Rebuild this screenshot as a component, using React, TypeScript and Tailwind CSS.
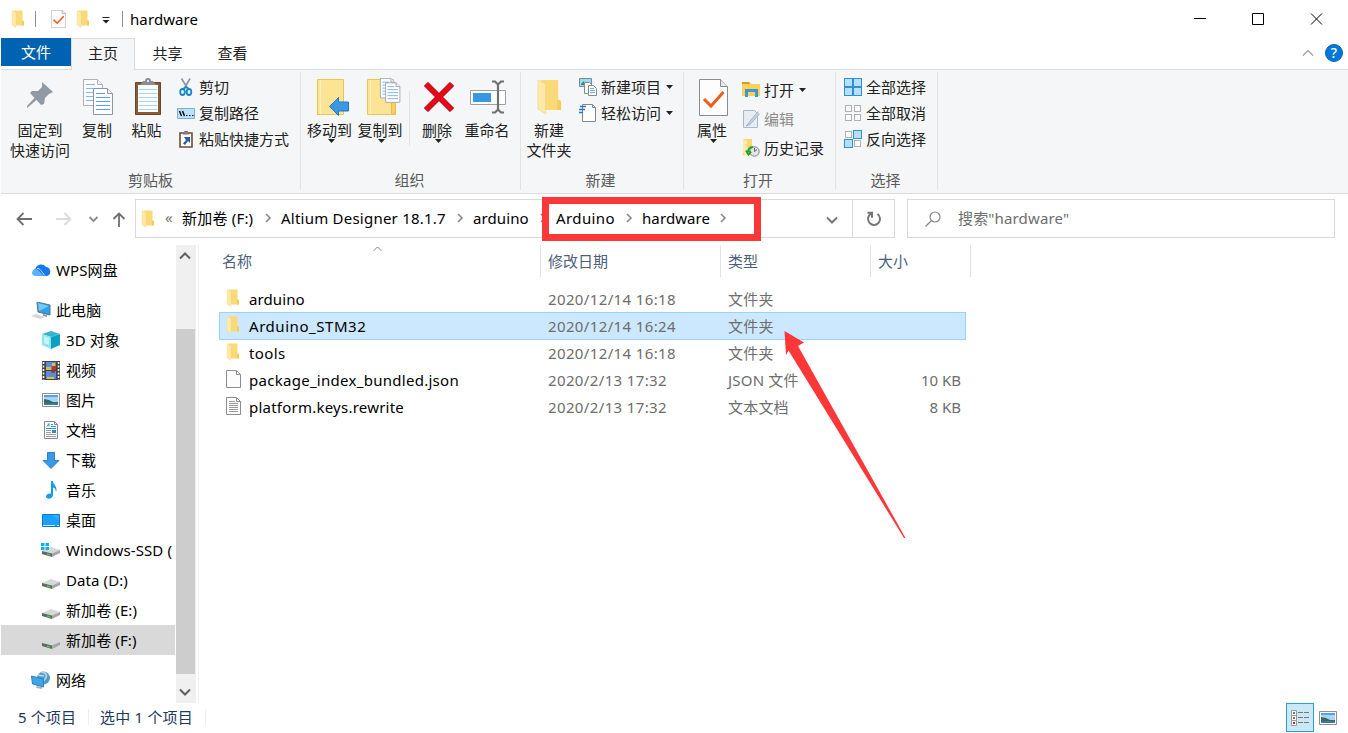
import type { ReactNode } from "react";
import clsx from "clsx";

type IconProps = { className?: string };

export default function App() {
  return (
    <div className="relative flex h-[733px] w-[1348px] flex-col overflow-hidden bg-white pl-px font-['Noto_Sans','Noto_Sans_CJK_SC',sans-serif] text-[15px] leading-5 text-black">
      <TitleBar />
      <Tabs />
      <Ribbon />
      <AddressRow />
      <main className="flex h-[458px]">
        <Sidebar />
        <Scrollbar />
        <FileList />
      </main>
      <StatusBar />

      <div className="absolute left-[542px] top-[197px] h-11 w-[219px] border-[7px] border-[#fb3837]" />
      <svg className="absolute left-[780px] top-[328px]" width="130" height="214" viewBox="780 328 130 214">
        <path d="M784.500 331L804 342.500L798 346L905.500 538L904 538L788.500 350.500L786 355Z" fill="#fb3837" />
      </svg>
    </div>
  );
}

function TitleBar() {
  return (
    <header className="flex h-[38px] shrink-0 items-center">
      <FolderIcon className="ml-[10px] h-[18px] w-[14px]" />
      <span className="ml-[10px] h-4 w-px bg-[#8f8f8f]" />
      <CheckPage className="ml-[15px] h-[18px] w-[15px]" />
      <FolderIcon className="ml-[10px] h-[18px] w-[14px]" />
      <svg className="ml-[12px] mt-0.5" width="8" height="8">
        <path d="M0.500 1.500h7" stroke="#222" />
        <path d="M0.500 4h7l-3.500 3.500z" fill="#222" />
      </svg>
      <span className="ml-[12px] h-4 w-px bg-[#8f8f8f]" />
      <span className="ml-[7px] tracking-[0.1px]">hardware</span>

      <svg className="ml-auto mr-[24px]" width="132" height="14" fill="none" stroke="#000">
        <path d="M2 6.500h12M60.500 1.500h11v11h-11zM119 1.500l11 11M130 1.500l-11 11" />
      </svg>
    </header>
  );
}

function Tabs() {
  return (
    <nav className="flex h-8 shrink-0 items-start">
      <span className="flex h-7 w-[70px] items-center justify-center bg-[#0063b1] text-white">文件</span>
      <span className="z-10 flex h-8 w-16 items-center justify-center border border-b-0 border-[#dadbdc] bg-[#f5f6f7] pb-1 text-[#222]">
        主页
      </span>
      <span className="flex h-8 w-[65px] items-center justify-center pb-0.5 text-[#222]">共享</span>
      <span className="flex h-8 w-[65px] items-center justify-center pb-0.5 text-[#222]">查看</span>
      <Chevron className="ml-auto mt-[10px] h-[9px] w-3 rotate-180 text-[#9a9a9a]" thin />
      <span className="ml-[11px] mr-[5px] mt-1.5 flex size-[18px] items-center justify-center rounded-full border border-[#0a64b4] bg-[#0078d7] text-[14px] font-medium text-white">
        ?
      </span>
    </nav>
  );
}

function Ribbon() {
  return (
    <section className="-mt-px flex h-[125px] shrink-0 border-y border-[#dadbdc] bg-[#f5f6f7] text-[#222]">
      <Group label="剪贴板" className="w-[300px]" labelClass="pr-px">
        <BigButton icon={<PinIcon />} label="固定到" second="快速访问" className="w-[78px]" />
        <BigButton icon={<CopyIcon />} label="复制" className="w-9" />
        <BigButton icon={<PasteIcon />} label="粘贴" className="w-[63px]" />
        <div className="-ml-px pt-1">
          <SmallButton icon={<ScissorsIcon />} label="剪切" />
          <SmallButton icon={<PathIcon />} label="复制路径" />
          <SmallButton icon={<ShortcutIcon />} label="粘贴快捷方式" />
        </div>
      </Group>

      <Group label="组织" className="w-[220px] pl-[3px]" labelClass="pr-[6px]">
        <BigButton icon={<MoveToIcon />} label="移动到" className="w-[51px]" arrow />
        <BigButton icon={<CopyToIcon />} label="复制到" className="w-[50px]" arrow />
        <span className="ml-1 mr-0.5 mt-[21px] h-[55px] w-px bg-[#e2e3e4]" />
        <BigButton icon={<DeleteIcon />} label="删除" className="w-[50px]" arrow />
        <BigButton icon={<RenameIcon />} label="重命名" className="w-[50px]" />
      </Group>

      <Group label="新建" className="w-[163px] pl-[3px]" labelClass="pr-[7px]">
        <BigButton icon={<FolderIcon className="h-[36px] w-[27px]" />} label="新建" second="文件夹" className="w-[50px]" />
        <div className="pl-[5px] pt-1">
          <SmallButton icon={<NewItemIcon />} label="新建项目" arrow />
          <SmallButton icon={<EasyAccessIcon />} label="轻松访问" arrow />
        </div>
      </Group>

      <Group label="打开" className="w-[152px] pl-[3px]" labelClass="pr-[7px]">
        <BigButton icon={<CheckPage className="ml-0.5 h-[37px] w-[29px]" />} label="属性" className="w-[50px]" arrow />
        <div className="pl-[5px] pt-[5px]">
          <SmallButton icon={<OpenIcon />} label="打开" arrow tall />
          <SmallButton icon={<EditIcon />} label="编辑" muted tall />
          <SmallButton icon={<HistoryIcon />} label="历史记录" tall />
        </div>
      </Group>

      <Group label="选择" className="w-[102px] pl-[8px]" labelClass="pr-[11px]">
        <div className="pt-1">
          <SmallButton icon={<TilesIcon kind="all" />} label="全部选择" />
          <SmallButton icon={<TilesIcon kind="none" />} label="全部取消" />
          <SmallButton icon={<TilesIcon kind="invert" />} label="反向选择" />
        </div>
      </Group>
    </section>
  );
}

function Group(props: { label: string; className: string; labelClass?: string; children: ReactNode }) {
  return (
    <div className={clsx("relative flex shrink-0 flex-col", props.className)}>
      <div className="flex h-[100px]">{props.children}</div>
      <div className={clsx("text-center text-[#5a5a5a]", props.labelClass)}>{props.label}</div>
      <span className="absolute right-0 top-0.5 h-[118px] w-px bg-[#e2e3e4]" />
    </div>
  );
}

function BigButton(props: { icon: ReactNode; label: string; second?: string; className: string; arrow?: boolean }) {
  return (
    <div className={clsx("flex shrink-0 flex-col items-center whitespace-nowrap", props.className)}>
      <div className="mb-[2px] mt-[7px] flex h-10 items-center justify-center">{props.icon}</div>
      <span className="mt-px">{props.label}</span>
      {props.second && <span>{props.second}</span>}
      {props.arrow && <DropArrow className="-mt-px ml-[3px]" />}
    </div>
  );
}

function SmallButton(props: { icon: ReactNode; label: string; arrow?: boolean; muted?: boolean; tall?: boolean }) {
  return (
    <div className={clsx("flex items-center whitespace-nowrap", props.tall ? "h-[29px]" : "h-[26px]", props.muted && "text-[#8a8a8a]")}>
      <span className="-ml-px mr-[4px] flex w-[19px] justify-center">{props.icon}</span>
      {props.label}
      {props.arrow && <DropArrow className="ml-[5px]" />}
    </div>
  );
}

function DropArrow({ className }: IconProps) {
  return (
    <svg className={className} width="7" height="4">
      <path d="M0 0h7L3.500 4z" fill="#222" />
    </svg>
  );
}

function Chevron({ className, thin }: IconProps & { thin?: boolean }) {
  return (
    <svg className={className} viewBox="0 0 12 9" fill="none" stroke="currentColor" strokeWidth={thin ? 1.2 : 2}>
      <path d="M1 1.500l5 5 5-5" />
    </svg>
  );
}

function AddressRow() {
  return (
    <section className="flex h-[51px] shrink-0 items-start pt-[5px]">
      <div className="flex h-[39px] w-[134px] items-center">
        <svg width="134" height="39" fill="none" strokeWidth="1.800">
          <path d="M31 20H16.500M22.500 14l-6 6 6 6" stroke="#6f6f6f" />
          <path d="M55 20h14.500M63.500 14l6 6-6 6" stroke="#dcdcdc" />
          <path d="M88.500 18l4 4 4-4" stroke="#8a8a8a" />
          <path d="M118 28V14.500M112.500 20l5.500-5.500 5.500 5.500" stroke="#6f6f6f" />
        </svg>
      </div>
      <div className="flex h-[39px] w-[760px] items-center whitespace-nowrap border border-[#d9d9d9]">
        <FolderIcon className="ml-[5px] h-[18px] w-[14px]" />
        <span className="ml-[10px] w-[17px] pb-1 text-[#777]">«</span>
        <Crumb label="新加卷 (F:)" className="w-[99px] tracking-[0.2px]" />
        <Crumb label="Altium Designer 18.1.7" className="w-[192px] tracking-[0.23px]" />
        <Crumb label="arduino" className="w-[83px] tracking-[0.1px]" />
        <Crumb label="Arduino" className="w-[86px] tracking-[0.4px]" />
        <Crumb label="hardware" className="w-[94px] tracking-[0.1px]" />
        <Chevron className="ml-auto mr-[14px] mt-1 h-[9px] w-3 text-[#777]" />
        <span className="h-[37px] w-px bg-[#d9d9d9]" />
        <span className="flex w-[41px] justify-center">
          <svg width="16" height="16" fill="none" stroke="#777" strokeWidth="2">
            <path d="M11.500 3A6 6 0 1 1 5 2.700M1.500 1.800H6v5" />
          </svg>
        </span>
      </div>
      <div className="ml-3 flex h-[39px] w-[428px] items-center border border-[#d9d9d9] text-[#6d6d6d]">
        <svg className="ml-[17px]" width="16" height="16" fill="none" stroke="#888" strokeWidth="1.200">
          <circle cx="10" cy="6" r="5" />
          <path d="M6.500 9.500L0.500 15.500" />
        </svg>
        <span className="ml-[17px] pb-0.5 tracking-[0.15px]">搜索"hardware"</span>
      </div>
    </section>
  );
}

function Crumb({ label, className }: { label: string; className: string }) {
  return (
    <span className={clsx("flex shrink-0 items-center justify-between pb-0.5", className)}>
      {label}
      <svg className="mr-[9px]" width="7" height="10" fill="none" stroke="#888" strokeWidth="1.600">
        <path d="M1 1l4 4-4 4" />
      </svg>
    </span>
  );
}

const drives = [
  { label: "3D 对象", icon: <CubeIcon /> },
  { label: "视频", icon: <VideoIcon /> },
  { label: "图片", icon: <PictureIcon /> },
  { label: "文档", icon: <DocumentIcon /> },
  { label: "下载", icon: <DownloadIcon /> },
  { label: "音乐", icon: <MusicIcon /> },
  { label: "桌面", icon: <DesktopIcon /> },
  { label: "Windows-SSD (", icon: <DriveIcon windows /> },
  { label: "Data (D:)", icon: <DriveIcon /> },
  { label: "新加卷 (E:)", icon: <DriveIcon /> },
  { label: "新加卷 (F:)", icon: <DriveIcon />, selected: true },
];

function Sidebar() {
  return (
    <aside className="flex w-[174px] shrink-0 flex-col overflow-hidden whitespace-nowrap pt-[10px]">
      <SideItem icon={<CloudIcon />} label="WPS网盘" />
      <div className="h-[10px]" />
      <SideItem icon={<ComputerIcon />} label="此电脑" />
      {drives.map((item) => (
        <SideItem key={item.label} {...item} nested />
      ))}
      <div className="h-[10px]" />
      <SideItem icon={<NetworkIcon />} label="网络" />
    </aside>
  );
}

function SideItem(props: { icon: ReactNode; label: string; nested?: boolean; selected?: boolean }) {
  return (
    <div
      className={clsx(
        "flex h-[30px] shrink-0 items-center tracking-[0.1px]",
        props.nested ? "pl-[39px]" : "pl-[29px]",
        props.selected && "bg-[#d9d9d9]",
      )}
    >
      <span className="mr-[4px] flex w-[22px] shrink-0 justify-center">{props.icon}</span>
      {props.label}
    </div>
  );
}

function Scrollbar() {
  return (
    <div className="ml-px flex w-5 shrink-0 flex-col bg-[#f0f0f0]">
      <Chevron className="ml-[3px] mt-[6px] h-[9px] w-3 rotate-180 text-[#606060]" />
      <span className="mt-[69px] h-[345px] w-[19px] bg-[#cdcdcd]" />
      <Chevron className="ml-[3px] mt-[14px] h-[9px] w-3 text-[#606060]" />
    </div>
  );
}

const files = [
  { name: "arduino", date: "2020/12/14 16:18", type: "文件夹", size: "", icon: <SmallFolder />, tracking: "tracking-[0.1px]" },
  { name: "Arduino_STM32", date: "2020/12/14 16:24", type: "文件夹", size: "", icon: <SmallFolder />, tracking: "tracking-[0.55px]", selected: true },
  { name: "tools", date: "2020/12/14 16:18", type: "文件夹", size: "", icon: <SmallFolder />, tracking: "tracking-[0.4px]" },
  { name: "package_index_bundled.json", date: "2020/2/13 17:32", type: "JSON 文件", size: "10 KB", icon: <FileIcon />, tracking: "tracking-[0.28px]" },
  { name: "platform.keys.rewrite", date: "2020/2/13 17:32", type: "文本文档", size: "8 KB", icon: <FileIcon lines />, tracking: "tracking-[0.23px]" },
];

function FileList() {
  return (
    <section className="ml-0.5 flex-1 border-l border-[#f0f0f0]">
      <div className="flex h-8 items-center text-[#4c607a]">
        <span className="relative flex h-8 w-[342px] items-center border-r border-[#e2e2e2] pl-[23px]">
          名称
          <Chevron className="absolute left-[173px] top-0 h-[7px] w-[11px] rotate-180 text-[#777]" thin />
        </span>
        <span className="flex h-8 w-[180px] items-center border-r border-[#e2e2e2] pl-[7px]">修改日期</span>
        <span className="flex h-8 w-[150px] items-center border-r border-[#e2e2e2] pl-[7px]">类型</span>
        <span className="flex h-8 w-[100px] items-center border-r border-[#e2e2e2] pl-[7px]">大小</span>
      </div>
      <div className="ml-[20px] w-[747px] pt-2">
        {files.map((file) => (
          <div
            key={file.name}
            className={clsx(
              "-mb-px flex h-7 items-center border text-[#6d6d6d]",
              file.selected ? "border-[#99d1ff] bg-[#cce8ff]" : "border-transparent",
            )}
          >
            <span className="ml-[4px] flex w-[18px] justify-center">{file.icon}</span>
            <span className={clsx("ml-[7px] w-[299px] text-black", file.tracking)}>{file.name}</span>
            <span className="w-[180px] tracking-[0.37px]">{file.date}</span>
            <span className="w-[130px] tracking-[0.2px]">{file.type}</span>
            <span className="ml-auto mr-[4px]">{file.size}</span>
          </div>
        ))}
      </div>
    </section>
  );
}

function StatusBar() {
  return (
    <footer className="flex h-[30px] shrink-0 items-start text-[#1e395b]">
      <div className="flex h-7 items-center pl-[17px]">
        <span className="w-[70px] tracking-[0.1px]">5 个项目</span>
        <span className="h-4 w-px bg-[#eee]" />
        <span className="ml-[11px] w-[105px] tracking-[0.2px]">选中 1 个项目</span>
        <span className="h-4 w-px bg-[#eee]" />
      </div>
      <div className="ml-auto mr-[11px] flex items-center">
        <span className="flex h-[29px] w-7 items-center justify-center border border-[#26a0da] bg-[#cbe8f6]">
          <svg width="18" height="16" fill="none">
            <path d="M0.500 0.500h5v5h-5zM0.500 5.500h5v5h-5zM0.500 10.500h5v5h-5z" fill="#fff" stroke="#999" />
            <path d="M7 2.500h5M13 2.500h5M7 7.500h5M13 7.500h5M7 12.500h5M13 12.500h5" stroke="#777" />
            <path d="M2 2h2v2h-2z" fill="#3a86b8" />
            <path d="M2 7h2v2h-2z" fill="#c86432" />
            <path d="M2 12h2v2h-2z" fill="#d02020" />
          </svg>
        </span>
        <span className="ml-[5px]">
          <PictureIcon />
        </span>
      </div>
    </footer>
  );
}

function FolderIcon({ className }: IconProps) {
  return (
    <svg className={className} viewBox="0 0 28 36" preserveAspectRatio="none">
      <path d="M5 1h18v20l3 2v8H5z" fill="#f9d978" />
      <path d="M22 21h3l1 2v8h-4z" fill="#f3cb62" />
      <path d="M2 1l8 4v30l-8-5z" fill="#ffe9a8" stroke="#f2d27a" strokeWidth="0.600" />
    </svg>
  );
}

function SmallFolder() {
  return <FolderIcon className="-mt-0.5 h-[18px] w-[14px]" />;
}

function CheckPage({ className }: IconProps) {
  return (
    <svg className={className} viewBox="0 0 29 37" preserveAspectRatio="none" fill="none">
      <path d="M0.500 0.500h21l7 7v29H0.500z" fill="#fdfdfd" stroke="#8c8c8c" />
      <path d="M21.500 0.500v7h7" fill="#e8e8e8" stroke="#8c8c8c" />
      <path d="M5 20l7 7L24.500 13" stroke="#f05a1a" strokeWidth="3" />
    </svg>
  );
}

function PinIcon() {
  return (
    <svg width="26" height="26" className="-mt-1" fill="#8f9aa3">
      <path d="M15 0l11 10-4 2-4 4-1 6-3 1-4.500-5L0 26l0-2 7.500-8L3 11l2-2 6 0 4-4z" />
    </svg>
  );
}

function PageLines({ x, y }: { x: number; y: number }) {
  return (
    <g transform={`translate(${x} ${y})`}>
      <path d="M0.500 0.500h14l5 5v21H0.500z" fill="#fff" stroke="#8b95a0" />
      <path d="M14.500 0.500v5h5" fill="#eee" stroke="#8b95a0" />
      <path d="M3 5.500h9M3 9.500h14M3 13.500h14M3 17.500h14M3 21.500h14" stroke="#5b9bf5" />
    </g>
  );
}

function CopyIcon() {
  return (
    <svg width="30" height="36" className="ml-0.5 shrink-0" fill="none">
      <g opacity="0.700">
        <PageLines x={0} y={0} />
      </g>
      <PageLines x={10} y={9} />
    </svg>
  );
}

function PasteIcon() {
  return (
    <svg width="26" height="37" className="-mt-0.5 ml-0.5" fill="none">
      <path d="M0.500 4.500h25v32h-25z" fill="#8a5a35" stroke="#6b4527" />
      <path d="M3 7h20v27H3z" fill="#fafcfd" />
      <path d="M4 11.500h18M4 15.500h18M4 19.500h18M4 23.500h18M4 27.500h18M4 31.500h18" stroke="#a9d4ec" />
      <path d="M5 7l3-4h2a3 3 0 0 1 6 0h2l3 4z" fill="#8b8e90" />
      <circle cx="13" cy="3" r="1" fill="#fff" />
    </svg>
  );
}

function ScissorsIcon() {
  return (
    <svg width="14" height="18" fill="none">
      <path d="M2.500 0.500L9 11M11 0.500L5 11" stroke="#8b9299" strokeWidth="1.600" />
      <ellipse cx="3.500" cy="14" rx="2.300" ry="3" stroke="#1688c9" strokeWidth="1.800" />
      <ellipse cx="10" cy="14" rx="2.300" ry="3" stroke="#1688c9" strokeWidth="1.800" />
      <path d="M4 11l3-2 3 2" stroke="#1688c9" strokeWidth="1.600" />
    </svg>
  );
}

function PathIcon() {
  return (
    <svg width="18" height="11" fill="none">
      <path d="M0.500 0.500h17v10h-17z" fill="#b9e2fb" stroke="#7badd6" />
      <path d="M2.500 3l2 5M5.500 3l2 5" stroke="#111" strokeWidth="1.500" />
      <path d="M9 7.500h1.500M12 7.500h1.500M15 7.500h1.500" stroke="#111" />
    </svg>
  );
}

function ShortcutIcon() {
  return (
    <svg width="14" height="18" fill="none">
      <path d="M1 3h12v14H1z" fill="#fff" stroke="#704c30" strokeWidth="1.600" />
      <path d="M4 4l1.500-2.500h3L10 4z" fill="#888" stroke="#777" />
      <path d="M5 7h6v6L9 11l-3 4-2-1.500 3-3.500z" fill="#245fa8" />
    </svg>
  );
}

function TallFolder() {
  return (
    <>
      <path d="M0.500 1.500h26v22l2 2v11h-28z" fill="#fde394" stroke="#e8c556" />
      <path d="M3.500 2v34" stroke="#fff0bf" />
      <path d="M24.500 36v-11l2-1.500 2 1.500v11z" fill="#f7cf61" stroke="#e8bd4c" />
    </>
  );
}

function MoveToIcon() {
  return (
    <svg width="33" height="39" className="ml-[7px]" fill="none">
      <path d="M0.500 1.500h26v35h-26z" fill="#fde394" stroke="#e8c556" />
      <path d="M3.500 2v34" stroke="#fff0bf" />
      <path d="M12.500 28.500l9-9v4.500h10v9h-10v4.500z" fill="#3b98e4" stroke="#2277bd" />
    </svg>
  );
}

function CopyToIcon() {
  return (
    <svg width="34" height="39" className="ml-2" fill="none">
      <TallFolder />
      <g transform="translate(13 0) scale(.75)">
        <PageLines x={0} y={0} />
        <PageLines x={7} y={6} />
      </g>
    </svg>
  );
}

function DeleteIcon() {
  return (
    <svg width="32" height="32" className="ml-[3px]" fill="none">
      <path d="M3 3l26 26M29 3L3 29" stroke="#a90812" strokeWidth="6" />
      <path d="M3 3l26 26M29 3L3 29" stroke="#e90818" strokeWidth="4.500" />
    </svg>
  );
}

function RenameIcon() {
  return (
    <svg width="36" height="34" className="ml-0.5" fill="none">
      <path d="M0.500 10.500h35v14h-35z" fill="#fff" stroke="#9a9fa4" />
      <path d="M3 13h18v9H3z" fill="#3797e4" />
      <path d="M28 4v26M22 1.500h3l3 3 3-3h3M22 32.500h3l3-3 3 3h3" stroke="#707070" strokeWidth="2.200" />
    </svg>
  );
}

function NewItemIcon() {
  return (
    <svg width="18" height="18" fill="none">
      <path d="M0.500 0.500h12v8h-12z" fill="#9ed8f5" stroke="#7c8a93" />
      <path d="M2 6l3-3v4H2z" fill="#2b8a72" />
      <path d="M5.500 4.500h5l2 2v9h-7z" fill="#fff" stroke="#8a8a8a" />
      <path d="M9.500 7.500h5l3 3v7h-8z" fill="#fff" stroke="#8a8a8a" />
      <path d="M11 10.500h4M11 12.500h5M11 14.500h5" stroke="#6ea9e8" />
    </svg>
  );
}

function EasyAccessIcon() {
  return (
    <svg width="18" height="18" fill="none">
      <path d="M3.500 0.500h10l3 3v14h-13z" fill="#fff" stroke="#858585" />
      <path d="M13.500 0.500v3h3" stroke="#858585" />
      <path d="M1 2.500h6M0 5.500h6M0 8.500h4" stroke="#2878c8" strokeWidth="1.300" />
    </svg>
  );
}

function OpenIcon() {
  return (
    <svg width="18" height="17" fill="none">
      <path d="M0 1h7l2 2h9v12H0z" fill="#fbd15c" />
      <path d="M0 1h7l1 2H0z" fill="#d79b20" />
      <path d="M4.500 16V9.500h10V16" stroke="#3a96dd" strokeWidth="3" />
    </svg>
  );
}

function EditIcon() {
  return (
    <svg width="18" height="18" fill="none">
      <path d="M1.500 0.500h11l3 3v14h-14z" fill="#e6edf6" stroke="#aab7c8" />
      <path d="M16 1.500L6.500 13l-2.500 3 4-1.500L17.500 4" fill="#c5d1e0" stroke="#a5b5c8" />
    </svg>
  );
}

function HistoryIcon() {
  return (
    <svg width="18" height="18" fill="none">
      <path d="M1 0l9 0v10l1 6H1z" fill="#fad776" />
      <path d="M1 0l4 2v15l-4-3z" fill="#ffeaa8" />
      <circle cx="12.500" cy="12.500" r="4.700" fill="#e4e4e4" stroke="#858585" />
      <path d="M12.500 9v3.500l2.500-2" stroke="#666" />
      <path d="M11 8c-4 0-5 3-4.500 5M4 11.500l2.500 4 2.500-3" stroke="#22a038" strokeWidth="2" />
    </svg>
  );
}

function TilesIcon({ kind }: { kind: "all" | "none" | "invert" }) {
  const on = { all: [true, true, true, true], none: [false, false, false, false], invert: [false, true, true, false] }[kind];
  const spots = [[0.5, 0.5], [9.5, 0.5], [0.5, 9.5], [9.5, 9.5]];
  return (
    <svg width="18" height="18">
      {spots.map(([x, y], i) =>
        on[i] ? (
          <rect key={i} x={x} y={y} width="8" height="8" fill="#b5e0fa" stroke="#2f8fd8" />
        ) : (
          <rect key={i} x={x + 1} y={y + 1} width="6" height="6" fill="#fafafa" stroke="#b0b0b0" />
        ),
      )}
    </svg>
  );
}

function CloudIcon() {
  return (
    <svg width="19" height="13" className="-mt-0.5">
      <path d="M4 13a4 4 0 0 1-.5-7.500A6 6 0 0 1 14 4a4.600 4.600 0 0 1 1 9z" fill="#1677f2" />
      <path d="M0 10c0-4 5-5 7-2l5 5H4c-2 0-4-1-4-3z" fill="#5bb4fb" />
      <path d="M5 5.500c3-.5 4 3 8 7" fill="none" stroke="#cde7ff" />
    </svg>
  );
}

function ComputerIcon() {
  return (
    <svg width="20" height="18" className="mt-0.5">
      <path d="M6 0l13 3v10L7 10z" fill="#2f9fe6" stroke="#587086" />
      <path d="M7 1l11 3-10 5z" fill="#6ecbfa" />
      <path d="M12 12l4 1v2l-4-1z" fill="#8b98a3" />
      <path d="M0 14l5-2 9 3-5 2z" fill="#d4d8db" />
    </svg>
  );
}

function CubeIcon() {
  return (
    <svg width="18" height="18">
      <path d="M9 0l9 3-9 3-9-3z" fill="#36b4cf" />
      <path d="M0 3l9 3v12l-9-4z" fill="#8ae5ee" />
      <path d="M18 3L9 6v12l9-4z" fill="#0aa0c4" />
      <path d="M2 5l5 2v7l-5-2z" fill="#c5f5f6" />
    </svg>
  );
}

function VideoIcon() {
  return (
    <svg width="18" height="19">
      <path d="M0 0h18v19H0z" fill="#444" />
      <path d="M4 1h10v8H4zM4 10h10v8H4z" fill="#568de5" />
      <path d="M4 6h5v3H4zM5 16h7v2H5z" fill="#e3bd34" />
      <path d="M10 2h3v3h-3z" fill="#f3bc21" />
      <path d="M10 5h4v4h-4zM9 10h4v2H9z" fill="#b43b27" />
      <path d="M1.500 1v18M16.500 1v18" stroke="#fff" strokeWidth="1.600" strokeDasharray="2 1.500" />
    </svg>
  );
}

function PictureIcon() {
  return (
    <svg width="18" height="14">
      <path d="M0.500 0.500h17v13h-17z" fill="#fff" stroke="#8f8f8f" />
      <path d="M2 2h14v10H2z" fill="#a9d5f5" />
      <path d="M2 2h14v2H2z" fill="#5d9be5" />
      <path d="M2 6l5 1 4 2 5 0v1H2z" fill="#376b5d" />
      <path d="M2 10h14v2H2z" fill="#3979a8" />
    </svg>
  );
}

function DocumentIcon() {
  return (
    <svg width="14" height="18" fill="none">
      <path d="M0.500 0.500h10l3 3v14h-13z" fill="#fff" stroke="#858b90" />
      <path d="M10.500 0.500v3h3" stroke="#858b90" />
      <path d="M3 5.500l2-3v3M7 3.500h2M7 5.500h5M2 7.500h10" stroke="#2492d4" />
      <path d="M2 9.500h5M2 11.500h5M2 13.500h10M2 15.500h10" stroke="#a0a0a0" />
      <path d="M8 9h4v3H8z" fill="#3787b8" />
    </svg>
  );
}

function DownloadIcon() {
  return (
    <svg width="18" height="17">
      <path d="M5.500 0.500h7v8H17l-8 8-8-8h4.500z" fill="#3c98e4" stroke="#2a82cb" />
    </svg>
  );
}

function MusicIcon() {
  return (
    <svg width="11" height="18" fill="#169bf0">
      <path d="M5 0h2c0 4 5 5 3 11-.5-3-1-4-3-4.500V14c0 4-7 5-7 1.500C0 13 3 12 5 12.500z" />
    </svg>
  );
}

function DesktopIcon() {
  return (
    <svg width="18" height="13">
      <path d="M0.500 0.500h17v12h-17z" fill="#1aa0fa" stroke="#087bc5" />
      <path d="M1 11.500h12M15 11.500h2" stroke="#c6e9ff" />
      <path d="M10 1l7 0v6z" fill="#45b5ff" opacity=".5" />
    </svg>
  );
}

function DriveIcon({ windows }: { windows?: boolean }) {
  return (
    <svg width="20" height="16" className={windows ? "" : "-mb-[9px]"}>
      <g transform={windows ? "translate(1 -1)" : "translate(1 -4)"}>
        <path d="M0 10l9-4 9 3-8 4z" fill="#d6d7d8" />
        <path d="M0 10l10 2.500V16L0 13z" fill="#666" />
        <path d="M10 12.500L18 9v3l-8 4z" fill="#a5a6a7" />
        <path d="M5 13l3 1" stroke="#35d33c" strokeWidth="1.400" />
      </g>
      {windows && <path d="M0 1h3.500v3H0zM4.500 1H8v3H4.500zM0 5h3.500v3H0zM4.500 5H8v3H4.500z" fill="#00b4ef" />}
    </svg>
  );
}

function NetworkIcon() {
  return (
    <svg width="20" height="18">
      <circle cx="12.500" cy="7" r="6.500" fill="#5798c3" />
      <path d="M10 1c5 0 7 4 4 7s-1 4-2 5M7 4l6 1" stroke="#b7dcef" fill="none" strokeWidth="1.500" />
      <path d="M0.500 5l12 3v8l-11-3z" fill="#36a7ef" stroke="#3a7eae" />
      <path d="M6 15l5 1v2l-6-1z" fill="#aab1b6" />
    </svg>
  );
}

function FileIcon({ lines }: { lines?: boolean }) {
  return (
    <svg width="15" height="18" className="-mt-0.5 ml-px" fill="none">
      <path d="M0.500 0.500h10l4 4v13h-14z" fill="#fcfcfc" stroke="#8c8c8c" />
      <path d="M10.500 0.500v4h4" stroke="#8c8c8c" />
      {lines && <path d="M3 4.500h6M3 6.500h9M3 8.500h9M3 10.500h9M3 12.500h9M3 14.500h9" stroke="#9a9a9a" />}
    </svg>
  );
}
